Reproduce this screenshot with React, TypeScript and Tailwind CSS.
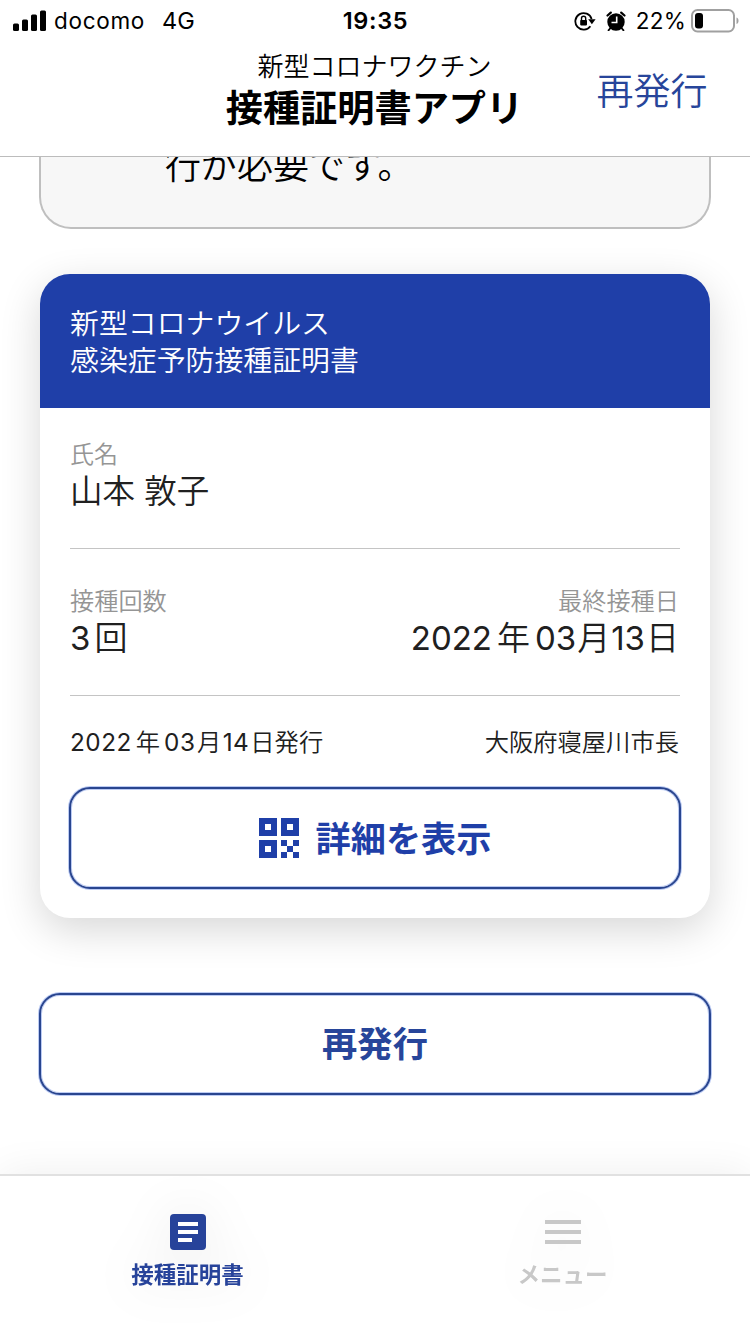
import React from "react";

function StatusBar() {
  return (
    <div className="flex h-10 items-center justify-between pl-[13px] pr-[11px] pt-px text-[22.5px] leading-10 text-black">
      <div className="flex w-[300px] items-center">
        <svg width="34" height="22" viewBox="0 0 34 22" className="block">
          <rect x="0" y="13.5" width="6" height="7.5" rx="1.5" />
          <rect x="9" y="9.5" width="6" height="11.5" rx="1.5" />
          <rect x="18" y="4.5" width="6" height="16.5" rx="1.5" />
          <rect x="27" y="0.5" width="6" height="20.5" rx="1.5" />
        </svg>
        <span className="ml-[7px] tracking-[0.7px]">docomo</span>
        <span className="ml-[17px] text-[23.5px]">4G</span>
      </div>
      <span className="pr-px text-[23.5px] font-semibold tracking-[0.7px]">19:35</span>
      <div className="flex w-[300px] items-center justify-end">
        <svg width="22" height="20" viewBox="0 0 22 20" className="block">
          <path d="M16.4 15.2A8.3 8.3 0 1 1 17.6 8" fill="none" stroke="black" strokeWidth="1.8" />
          <path d="M14.2 8.3h7.4l-3.7 5z" />
          <rect x="6.2" y="9" width="6.8" height="5.4" rx="0.8" />
          <path d="M7.500 9.500V7.400a2.100 2.100 0 0 1 4.200 0V9.500" fill="none" stroke="black" strokeWidth="1.400" />
        </svg>
        <svg width="20" height="20" viewBox="0 0 20 20" className="ml-[10px] block">
          <circle cx="10" cy="11" r="8.700" />
          <path d="M1.500 4.500L4.800 1.600M18.500 4.500L15.200 1.600" stroke="black" strokeWidth="2.200" strokeLinecap="round" />
          <path d="M4.500 17l-2 2.300M15.500 17l2 2.300" stroke="black" strokeWidth="1.800" strokeLinecap="round" />
          <path d="M10.700 5.500v6H5.500" fill="none" stroke="white" strokeWidth="1.600" />
        </svg>
        <span className="ml-[10px] tracking-[0.2px]">22%</span>
        <svg width="48" height="24" viewBox="0 0 48 24" className="ml-[5px] block">
          <rect x="1" y="1" width="42" height="21.500" rx="5.500" fill="none" stroke="#a0a0a0" strokeWidth="2" />
          <rect x="4" y="4" width="8" height="15.500" rx="3" />
          <path d="M45.500 8.500c1.600.6 2 2 2 3.300s-.4 2.700-2 3.300z" fill="#a0a0a0" />
        </svg>
      </div>
    </div>
  );
}

function Header() {
  return (
    <header className="h-[157px] border-b border-[#bcbcbc] bg-white">
      <StatusBar />
      <div className="grid grid-cols-[200px_1fr_200px] text-black">
        <span />
        <div className="flex flex-col items-center pr-px pt-[7px]">
          <span className="text-[26px] font-[350] leading-10">新型コロナワクチン</span>
          <span className="pt-px text-[37.2px] font-bold leading-[42px]">接種証明書アプリ</span>
        </div>
        <button className="pl-1 pt-[13px] text-[37px] font-[350] text-[#27459a]">再発行</button>
      </div>
    </header>
  );
}

const outlined =
  "flex h-[102px] items-center justify-center rounded-[21px] border-2 border-[#29458f] bg-white shadow-[0_0_0_1px_#bccbf3,inset_0_0_0_1px_#bccbf3]";

function QrIcon() {
  return (
    <svg width="40" height="40" viewBox="0 0 40 40" className="block" fill="#1f3fa8" shapeRendering="crispEdges">
      <path
        fillRule="evenodd"
        d="M0 0h18v18H0zM6 6v6h6V6zM22 0h18v18H22zM28 6v6h6V6zM0 22h18v18H0zM6 28v6h6v-6z"
      />
      <path d="M22 22h6v6h-6zM34 22h6v6h-6zM28 28h6v6h-6zM22 34h6v6h-6zM34 34h6v6h-6z" />
    </svg>
  );
}

function CertificateCard() {
  return (
    <section className="mt-[45px] h-[644px] rounded-[30px] bg-white font-[350] text-[#202020] shadow-[0_12px_40px_rgba(0,0,0,0.16)]">
      <div className="h-[134px] rounded-t-[30px] bg-[#1f3fa8] px-[30px] pt-[31px] text-[28.9px] leading-[37px] text-white">
        <div>新型コロナウイルス</div>
        <div>感染症予防接種証明書</div>
      </div>
      <div className="mx-[30px] h-[141px] border-b border-[#c4c4c4] pt-[29px]">
        <div className="text-[24px] leading-9 text-[#959595]">氏名</div>
        <div className="text-[32.5px] leading-[38px]">山本 敦子</div>
      </div>
      <div className="mx-[30px] flex h-[147px] justify-between border-b border-[#c4c4c4] pt-[35px]">
        <div>
          <div className="text-[24.2px] leading-9 text-[#959595]">接種回数</div>
          <div className="text-[33px] leading-[36px]">
            <span className="font-normal">3</span>
            <span className="ml-1">回</span>
          </div>
        </div>
        <div className="pr-px text-right">
          <div className="text-[24.2px] leading-9 text-[#959595]">最終接種日</div>
          <div className="text-[33px] leading-[36px]">
            <span className="font-normal">2022</span>
            <span className="mx-[5px]">年</span>
            <span className="font-normal">03</span>
            <span className="mx-px">月</span>
            <span className="font-normal">13</span>
            <span className="ml-px">日</span>
          </div>
        </div>
      </div>
      <div className="mx-[30px] mt-[28px] flex h-9 justify-between text-[24.3px] leading-9">
        <span>
          <span className="font-normal tracking-[0.5px]">2022</span>
          <span className="mx-[4px]">年</span>
          <span className="font-normal tracking-[0.5px]">03</span>
          <span className="mx-[1.5px]">月</span>
          <span className="font-normal tracking-[0.5px]">14</span>
          <span className="ml-px">日発行</span>
        </span>
        <span className="pr-px">大阪府寝屋川市長</span>
      </div>
      <div className="mx-[29px] mt-[27px]">
        <button className={`${outlined} w-full gap-[17px] text-[35.2px] font-bold text-[#1f3fa8]`}>
          <QrIcon />
          <span className="pt-[2px]">詳細を表示</span>
        </button>
      </div>
    </section>
  );
}

function TabBar() {
  return (
    <nav className="relative grid h-[160px] shrink-0 grid-cols-2 border-t-2 border-[#e1e1e1] bg-white shadow-[0_0_40px_rgba(0,0,0,0.07)]">
      <div className="flex flex-col items-center pt-[38px] text-[#27439a] drop-shadow-[0_0_24px_rgba(0,0,0,0.08)]">
        <svg width="36" height="36" viewBox="0 0 36 36" className="block">
          <rect width="36" height="36" rx="4" fill="#27439a" />
          <path d="M8 8h20v4H8zM8 16h20v4H8zM8 24h14v4H8z" fill="white" />
        </svg>
        <span className="mt-[9px] text-[22.5px] font-bold leading-8">接種証明書</span>
      </div>
      <div className="flex flex-col items-center pt-[38px] text-[#c8c8c8] drop-shadow-[0_0_24px_rgba(0,0,0,0.08)]">
        <svg width="36" height="36" viewBox="0 0 36 36" className="block" fill="#c8c8c8">
          <path d="M0 6h36v4H0zM0 16h36v4H0zM0 26h36v4H0z" />
        </svg>
        <span className="mt-[9px] text-[22.5px] font-bold leading-8">メニュー</span>
      </div>
    </nav>
  );
}

export default function App() {
  return (
    <div
      lang="ja"
      className="flex h-[1334px] w-[750px] flex-col overflow-hidden bg-white font-['Inter','Noto_Sans_CJK_JP',sans-serif]"
    >
      <Header />
      <main className="min-h-0 flex-1 overflow-hidden px-10">
        <div className="-mx-px flow-root h-[72px] rounded-b-[32px] border-x-2 border-b-2 border-[#bfbfbf] bg-[#f7f7f7] pl-[124px] text-black">
          <p className="-mt-[16px] text-[36px] font-[350] leading-[50px]">行が必要です。</p>
        </div>
        <CertificateCard />
        <button className={`${outlined} -mx-px mt-[75px] w-[672px] pt-[2px] text-[35.3px] font-bold text-[#27459a]`}>
          再発行
        </button>
      </main>
      <TabBar />
    </div>
  );
}
